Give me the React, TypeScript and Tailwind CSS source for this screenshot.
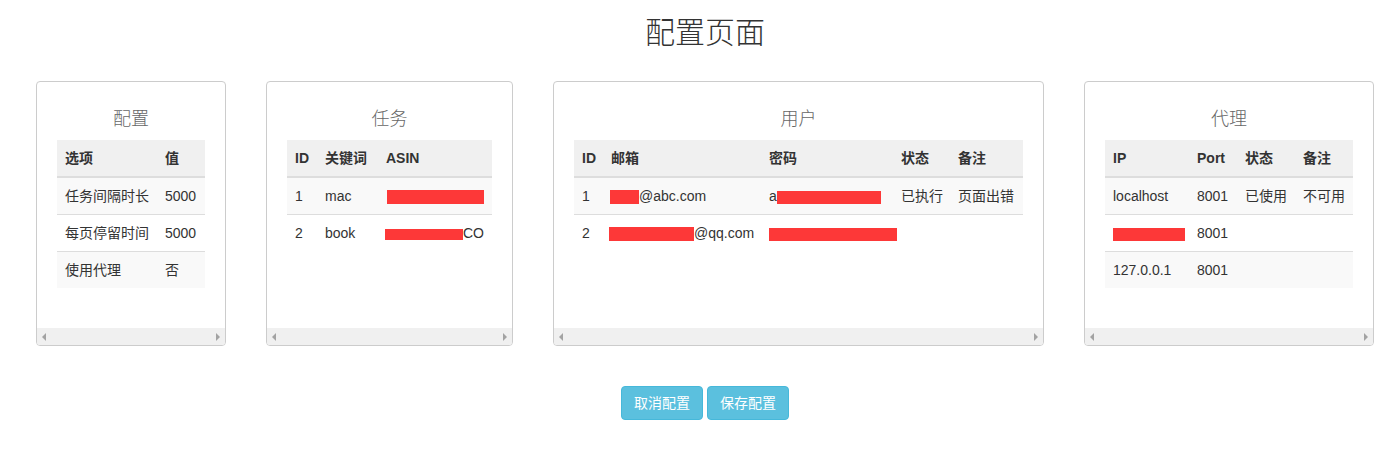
import React from 'react';

type Cell = React.ReactNode;

interface Panel {
    title: string;
    width: string;
    cols: { label: string; w: string }[];
    rows: Cell[][];
}

const Red = ({ w, h = 'h-[13px]' }: { w: string; h?: string }) => (
    <span className={`inline-block align-middle bg-[#fd3838] ${w} ${h}`} />
);

const panels: Panel[] = [
    {
        title: '配置',
        width: 'w-[190px]',
        cols: [
            { label: '选项', w: 'w-[100px]' },
            { label: '值', w: 'w-[48px]' },
        ],
        rows: [
            ['任务间隔时长', '5000'],
            ['每页停留时间', '5000'],
            ['使用代理', '否'],
        ],
    },
    {
        title: '任务',
        width: 'w-[247px]',
        cols: [
            { label: 'ID', w: 'w-[30px]' },
            { label: '关键词', w: 'w-[61px]' },
            { label: 'ASIN', w: 'w-[114px]' },
        ],
        rows: [
            ['1', 'mac', <span className="pl-px"><Red w="w-[97px]" h="h-[14px]" /></span>],
            ['2', 'book', <span className="-ml-[1px]"><Red w="w-[78px]" h="h-[11px]" />CO</span>],
        ],
    },
    {
        title: '用户',
        width: 'w-[491px]',
        cols: [
            { label: 'ID', w: 'w-[29px]' },
            { label: '邮箱', w: 'w-[158px]' },
            { label: '密码', w: 'w-[132px]' },
            { label: '状态', w: 'w-[57px]' },
            { label: '备注', w: 'w-[73px]' },
        ],
        rows: [
            [
                '1',
                <span className="-ml-px"><Red w="w-[29px]" h="h-[14px]" />@abc.com</span>,
                <span>a<Red w="w-[104px]" /></span>,
                '已执行',
                '页面出错',
            ],
            [
                '2',
                <span className="-ml-[2px]"><Red w="w-[85px]" h="h-[14px]" />@qq.com</span>,
                <Red w="w-[128px]" />,
                '',
                '',
            ],
        ],
    },
    {
        title: '代理',
        width: 'w-[290px]',
        cols: [
            { label: 'IP', w: 'w-[84px]' },
            { label: 'Port', w: 'w-[48px]' },
            { label: '状态', w: 'w-[58px]' },
            { label: '备注', w: 'w-[58px]' },
        ],
        rows: [
            ['localhost', '8001', '已使用', '不可用'],
            [<Red w="w-[72px]" />, '8001', '', ''],
            ['127.0.0.1', '8001', '', ''],
        ],
    },
];

const FakeScrollbar = () => (
    <div className="h-[17px] bg-[#f0f0f0] flex items-center justify-between px-[5px] shrink-0">
        <span className="w-0 h-0 border-y-[4px] border-y-transparent border-r-[4px] border-r-[#a3a3a3]" />
        <span className="w-0 h-0 border-y-[4px] border-y-transparent border-l-[4px] border-l-[#a3a3a3]" />
    </div>
);

const App: React.FC = () => {
    return (
        <div
            className="w-[1400px] h-[449px] bg-white text-[#333] pl-[10px]"
            style={{ fontFamily: '"Liberation Sans", "Noto Sans CJK SC", sans-serif' }}
        >
            <h1 className="pt-[16px] text-center text-[30px] leading-[33px] font-light text-[#333]">
                配置页面
            </h1>

            <div className="mt-[32px] flex justify-center gap-[40px]">
                {panels.map((panel) => (
                    <div
                        key={panel.title}
                        className={`${panel.width} h-[265px] border border-[#cccccc] rounded-[4px] overflow-hidden flex flex-col`}
                    >
                        <div className="flex-1 px-[20px] pt-[26px]">
                            <h3 className="text-center text-[18px] leading-[22px] font-light text-[#666] mb-[10px]">
                                {panel.title}
                            </h3>
                            <table className="w-full table-fixed border-collapse text-[14px] leading-[20px] whitespace-nowrap">
                                <thead>
                                    <tr className="bg-[#f0f0f0]">
                                        {panel.cols.map((c) => (
                                            <th
                                                key={c.label}
                                                className={`${c.w} p-[8px] text-left font-bold border-b-2 border-[#dddddd] overflow-hidden`}
                                            >
                                                {c.label}
                                            </th>
                                        ))}
                                    </tr>
                                </thead>
                                <tbody>
                                    {panel.rows.map((row, i) => (
                                        <tr key={i} className={i % 2 === 0 ? 'bg-[#f9f9f9]' : 'bg-white'}>
                                            {row.map((cell, j) => (
                                                <td
                                                    key={j}
                                                    className={`p-[8px] ${i > 0 ? 'border-t' : ''} border-[#dddddd] overflow-visible`}
                                                >
                                                    {cell}
                                                </td>
                                            ))}
                                        </tr>
                                    ))}
                                </tbody>
                            </table>
                        </div>
                        <FakeScrollbar />
                    </div>
                ))}
            </div>

            <div className="mt-[40px] flex justify-center gap-[4px]">
                <button className="px-[12px] py-[6px] text-[14px] leading-[20px] text-white bg-[#5bc0de] border border-[#46b8da] rounded-[4px]">
                    取消配置
                </button>
                <button className="px-[12px] py-[6px] text-[14px] leading-[20px] text-white bg-[#5bc0de] border border-[#46b8da] rounded-[4px]">
                    保存配置
                </button>
            </div>
        </div>
    );
};

export default App;
